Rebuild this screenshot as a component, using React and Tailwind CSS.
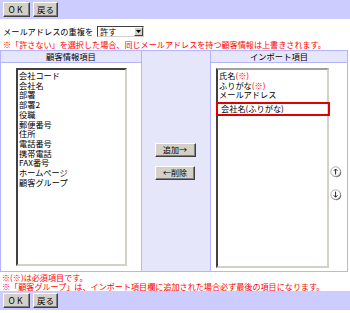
import React from "react";

const font = { fontFamily: '"Noto Sans CJK JP", "Noto Sans", sans-serif' };

function Btn({ children, className = "" }) {
  return (
    <div
      className={
        "flex items-center justify-center bg-[#d4d0c8] border border-t-white border-l-white border-r-[#404040] border-b-[#404040] shadow-[inset_-1px_-1px_0_#808080] text-[8.5px] leading-none text-black " +
        className
      }
    >
      {children}
    </div>
  );
}

function Bar() {
  return (
    <div className="h-[19px] w-[350px] bg-[#ccccff] flex items-center gap-[3px] px-[3px]">
      <Btn className="w-[27px] h-[15px] tracking-[2px]">OK</Btn>
      <Btn className="w-[25px] h-[15px]">戻る</Btn>
    </div>
  );
}

function CircleArrow({ up }) {
  return (
    <svg width="12" height="12" viewBox="0 0 12 12">
      <circle cx="6.4" cy="6.4" r="4.8" fill="#555" />
      <circle cx="5.6" cy="5.6" r="4.8" fill="#fff" stroke="#9a9a9a" strokeWidth="0.8" />
      {up ? (
        <path d="M5.6 8.6 V3 M3.8 4.8 L5.6 3 L7.4 4.8" stroke="#222" strokeWidth="1" fill="none" />
      ) : (
        <path d="M5.6 2.6 V8.2 M3.8 6.4 L5.6 8.2 L7.4 6.4" stroke="#222" strokeWidth="1" fill="none" />
      )}
    </svg>
  );
}

const leftItems = [
  "会社コード",
  "会社名",
  "部署",
  "部署2",
  "役職",
  "郵便番号",
  "住所",
  "電話番号",
  "携帯電話",
  "FAX番号",
  "ホームページ",
  "顧客グループ",
];

export default function App() {
  return (
    <div className="w-[350px] h-[313px] bg-white text-black overflow-hidden" style={font}>
      <Bar />
      <div className="flex items-center h-[13px] mt-[6px] pl-[3px] text-[8.2px] leading-none">
        <span className="w-[94px]">メールアドレスの重複を</span>
        <div className="flex items-center w-[47px] h-[11px] border border-t-[#404040] border-l-[#404040] border-r-[#d4d0c8] border-b-[#d4d0c8] bg-white">
          <span className="flex-1 pl-[2px] text-[8.2px]">許す</span>
          <div className="w-[9px] h-[9px] bg-[#d4d0c8] border border-t-white border-l-white border-r-[#404040] border-b-[#404040] flex items-center justify-center">
            <svg width="5" height="3" viewBox="0 0 5 3">
              <path d="M0 0 H5 L2.5 3 Z" fill="#000" />
            </svg>
          </div>
        </div>
      </div>
      <div className="h-[10px] mt-[2px] pl-[3px] text-[8.1px] leading-[10px] text-[#ff0000] whitespace-nowrap">
        ※「許さない」を選択した場合、同じメールアドレスを持つ顧客情報は上書きされます。
      </div>
      <div className="w-[348px] h-[222px] border border-[#b4b4ff] flex">
        <div className="w-[140px] flex flex-col">
          <div className="h-[12px] bg-[#e6e6fa] border-b border-[#b4b4ff] flex items-center justify-center text-[8.3px] leading-none">
            顧客情報項目
          </div>
          <div className="flex-1 pt-[5px] pl-[15px]">
            <div className="w-[111px] h-[198px] border-2 border-t-[#404040] border-l-[#404040] border-r-[#d4d0c8] border-b-[#d4d0c8] pl-[1px] pt-[1px] text-[8.2px] leading-[9.7px]">
              {leftItems.map((t) => (
                <div key={t} className="whitespace-nowrap">{t}</div>
              ))}
            </div>
          </div>
        </div>
        <div className="w-[70px] bg-[#e6e6fa] border-l border-r border-[#b4b4ff] flex flex-col items-center pt-[92px] pr-[2px] gap-[9px]">
          <Btn className="w-[41px] h-[14px] text-[8px]">追加→</Btn>
          <Btn className="w-[40px] h-[14px] text-[8px]">←削除</Btn>
        </div>
        <div className="flex-1 flex flex-col">
          <div className="h-[12px] bg-[#e6e6fa] border-b border-[#b4b4ff] flex items-center justify-center text-[8.3px] leading-none">
            インポート項目
          </div>
          <div className="flex-1 pt-[5px] pl-[5px] flex">
            <div className="w-[113px] h-[200px] border-2 border-t-[#a0a0a0] border-l-[#404040] border-r-[#d4d0c8] border-b-[#d4d0c8] pl-[1px] pt-[1px] text-[8.2px] leading-[9.7px]">
              <div className="whitespace-nowrap">
                氏名<span className="text-[#ff0000]">(※)</span>
              </div>
              <div className="whitespace-nowrap">
                ふりがな<span className="text-[#ff0000]">(※)</span>
              </div>
              <div className="whitespace-nowrap">メールアドレス</div>
              <div className="mt-[2px] -ml-[3px] -mr-[3px] h-[14px] border-2 border-[#e00000] pl-[3px] flex items-center whitespace-nowrap">
                会社名(ふりがな)
              </div>
            </div>
            <div className="flex flex-col pl-[1px] pt-[98px] gap-[11px]">
              <CircleArrow up />
              <CircleArrow />
            </div>
          </div>
        </div>
      </div>
      <div className="pl-[2px] pt-[1px] text-[8.1px] leading-[9px] text-[#ff0000] whitespace-nowrap">
        <div>※(※)は必須項目です。</div>
        <div>※「顧客グループ」は、インポート項目欄に追加された場合必ず最後の項目になります。</div>
      </div>
      <div className="mt-[0px]">
        <Bar />
      </div>
    </div>
  );
}
